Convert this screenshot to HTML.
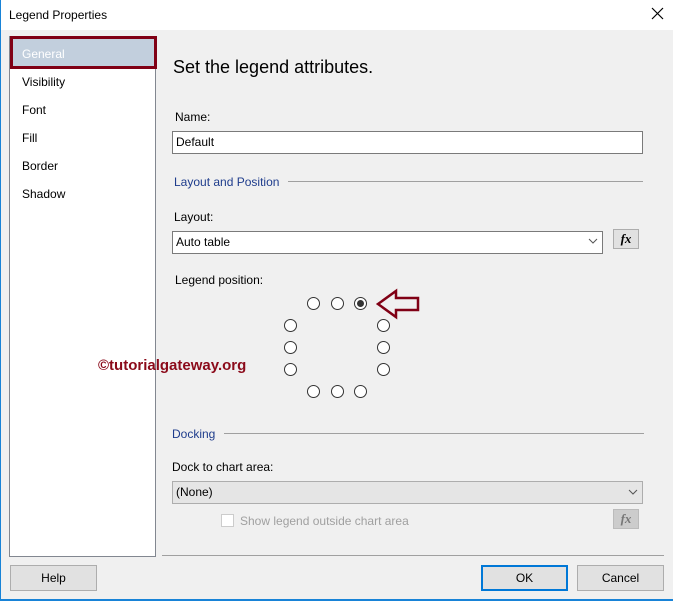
<!DOCTYPE html>
<html><head><style>
*{margin:0;padding:0;box-sizing:border-box}
body{width:673px;height:601px;background:#f0f0f0;font-family:"Liberation Sans",sans-serif;font-size:12px;color:#000;position:relative;overflow:hidden}
.a{position:absolute}
.btn{position:absolute;background:#e1e1e1;border:1px solid #adadad;text-align:center;line-height:24px;font-size:12px}
.r{position:absolute;width:13px;height:13px;border:1px solid #333;border-radius:50%;background:#fff}
.fx{position:absolute;background:#e1e1e1;border:1px solid #adadad;font-family:"Liberation Serif",serif;font-style:italic;font-weight:bold;font-size:13px;text-align:center;line-height:18px}
</style></head><body>
<div class="a" style="left:0;top:0;width:673px;height:30px;background:#fff"></div>
<div class="a" style="left:9px;top:8px;font-size:12px">Legend Properties</div>
<svg class="a" style="left:651px;top:7px" width="13" height="13"><path d="M1 1L12 12M12 1L1 12" stroke="#000" stroke-width="1.2"/></svg>
<div class="a" style="left:0;top:0;width:1px;height:601px;background:#1883d7"></div>
<div class="a" style="left:0;top:599px;width:673px;height:2px;background:#1883d7"></div>

<div class="a" style="left:9px;top:36px;width:147px;height:521px;background:#fff;border:1px solid #828790"></div>
<div class="a" style="left:10px;top:36px;width:147px;height:33px;background:#c2cfdd;border:3px solid #800015"></div>
<div class="a" style="left:22px;top:47px;color:#fff">General</div>
<div class="a" style="left:22px;top:75px">Visibility</div>
<div class="a" style="left:22px;top:103px">Font</div>
<div class="a" style="left:22px;top:131px">Fill</div>
<div class="a" style="left:22px;top:159px">Border</div>
<div class="a" style="left:22px;top:187px">Shadow</div>

<div class="a" style="left:173px;top:57px;font-size:18px">Set the legend attributes.</div>
<div class="a" style="left:175px;top:110px">Name:</div>
<div class="a" style="left:172px;top:131px;width:471px;height:23px;background:#fff;border:1px solid #7a7a7a;padding:3px 3px">Default</div>
<div class="a" style="left:174px;top:175px;color:#1e3c8c">Layout and Position</div>
<div class="a" style="left:288px;top:181px;width:355px;height:1px;background:#a0a0a0"></div>
<div class="a" style="left:174px;top:210px">Layout:</div>
<div class="a" style="left:172px;top:231px;width:431px;height:23px;background:#fff;border:1px solid #7a7a7a;padding:3px 3px">Auto table</div>
<svg class="a" style="left:588px;top:238px" width="10" height="7"><path d="M1 1L5 5L9 1" stroke="#555" fill="none"/></svg>
<div class="fx" style="left:613px;top:229px;width:26px;height:20px">fx</div>
<div class="a" style="left:175px;top:273px">Legend position:</div>

<div class="r" style="left:307px;top:297px"></div>
<div class="r" style="left:331px;top:297px"></div>
<div class="r" style="left:354px;top:297px"></div>
<div class="a" style="left:357px;top:300px;width:7px;height:7px;border-radius:50%;background:#333"></div>
<div class="r" style="left:284px;top:319px"></div>
<div class="r" style="left:377px;top:319px"></div>
<div class="r" style="left:284px;top:341px"></div>
<div class="r" style="left:377px;top:341px"></div>
<div class="r" style="left:284px;top:363px"></div>
<div class="r" style="left:377px;top:363px"></div>
<div class="r" style="left:307px;top:385px"></div>
<div class="r" style="left:331px;top:385px"></div>
<div class="r" style="left:354px;top:385px"></div>
<svg class="a" style="left:375px;top:288px" width="46" height="34"><path d="M3 16L21 3V10H43V22H21V29Z" fill="none" stroke="#800015" stroke-width="2.5"/></svg>
<div class="a" style="left:98px;top:357px;font-weight:bold;font-size:15px;color:#8b0a1a">©tutorialgateway.org</div>

<div class="a" style="left:172px;top:427px;color:#1e3c8c">Docking</div>
<div class="a" style="left:224px;top:433px;width:420px;height:1px;background:#a0a0a0"></div>
<div class="a" style="left:172px;top:460px">Dock to chart area:</div>
<div class="a" style="left:172px;top:481px;width:471px;height:23px;background:#e5e5e5;border:1px solid #adadad;padding:3px 3px">(None)</div>
<svg class="a" style="left:628px;top:489px" width="10" height="7"><path d="M1 1L5 5L9 1" stroke="#555" fill="none"/></svg>
<div class="a" style="left:221px;top:514px;width:13px;height:13px;border:1px solid #ccc;background:#fff"></div>
<div class="a" style="left:240px;top:514px;color:#a0a0a0">Show legend outside chart area</div>
<div class="fx" style="left:613px;top:509px;width:26px;height:20px;background:#ccc;border-color:#bbb;color:#777">fx</div>

<div class="a" style="left:162px;top:555px;width:502px;height:1px;background:#a0a0a0"></div>
<div class="btn" style="left:10px;top:565px;width:87px;height:26px">Help</div>
<div class="btn" style="left:481px;top:565px;width:87px;height:26px;border:2px solid #0078d7;line-height:22px">OK</div>
<div class="btn" style="left:577px;top:565px;width:87px;height:26px">Cancel</div>
</body></html>
